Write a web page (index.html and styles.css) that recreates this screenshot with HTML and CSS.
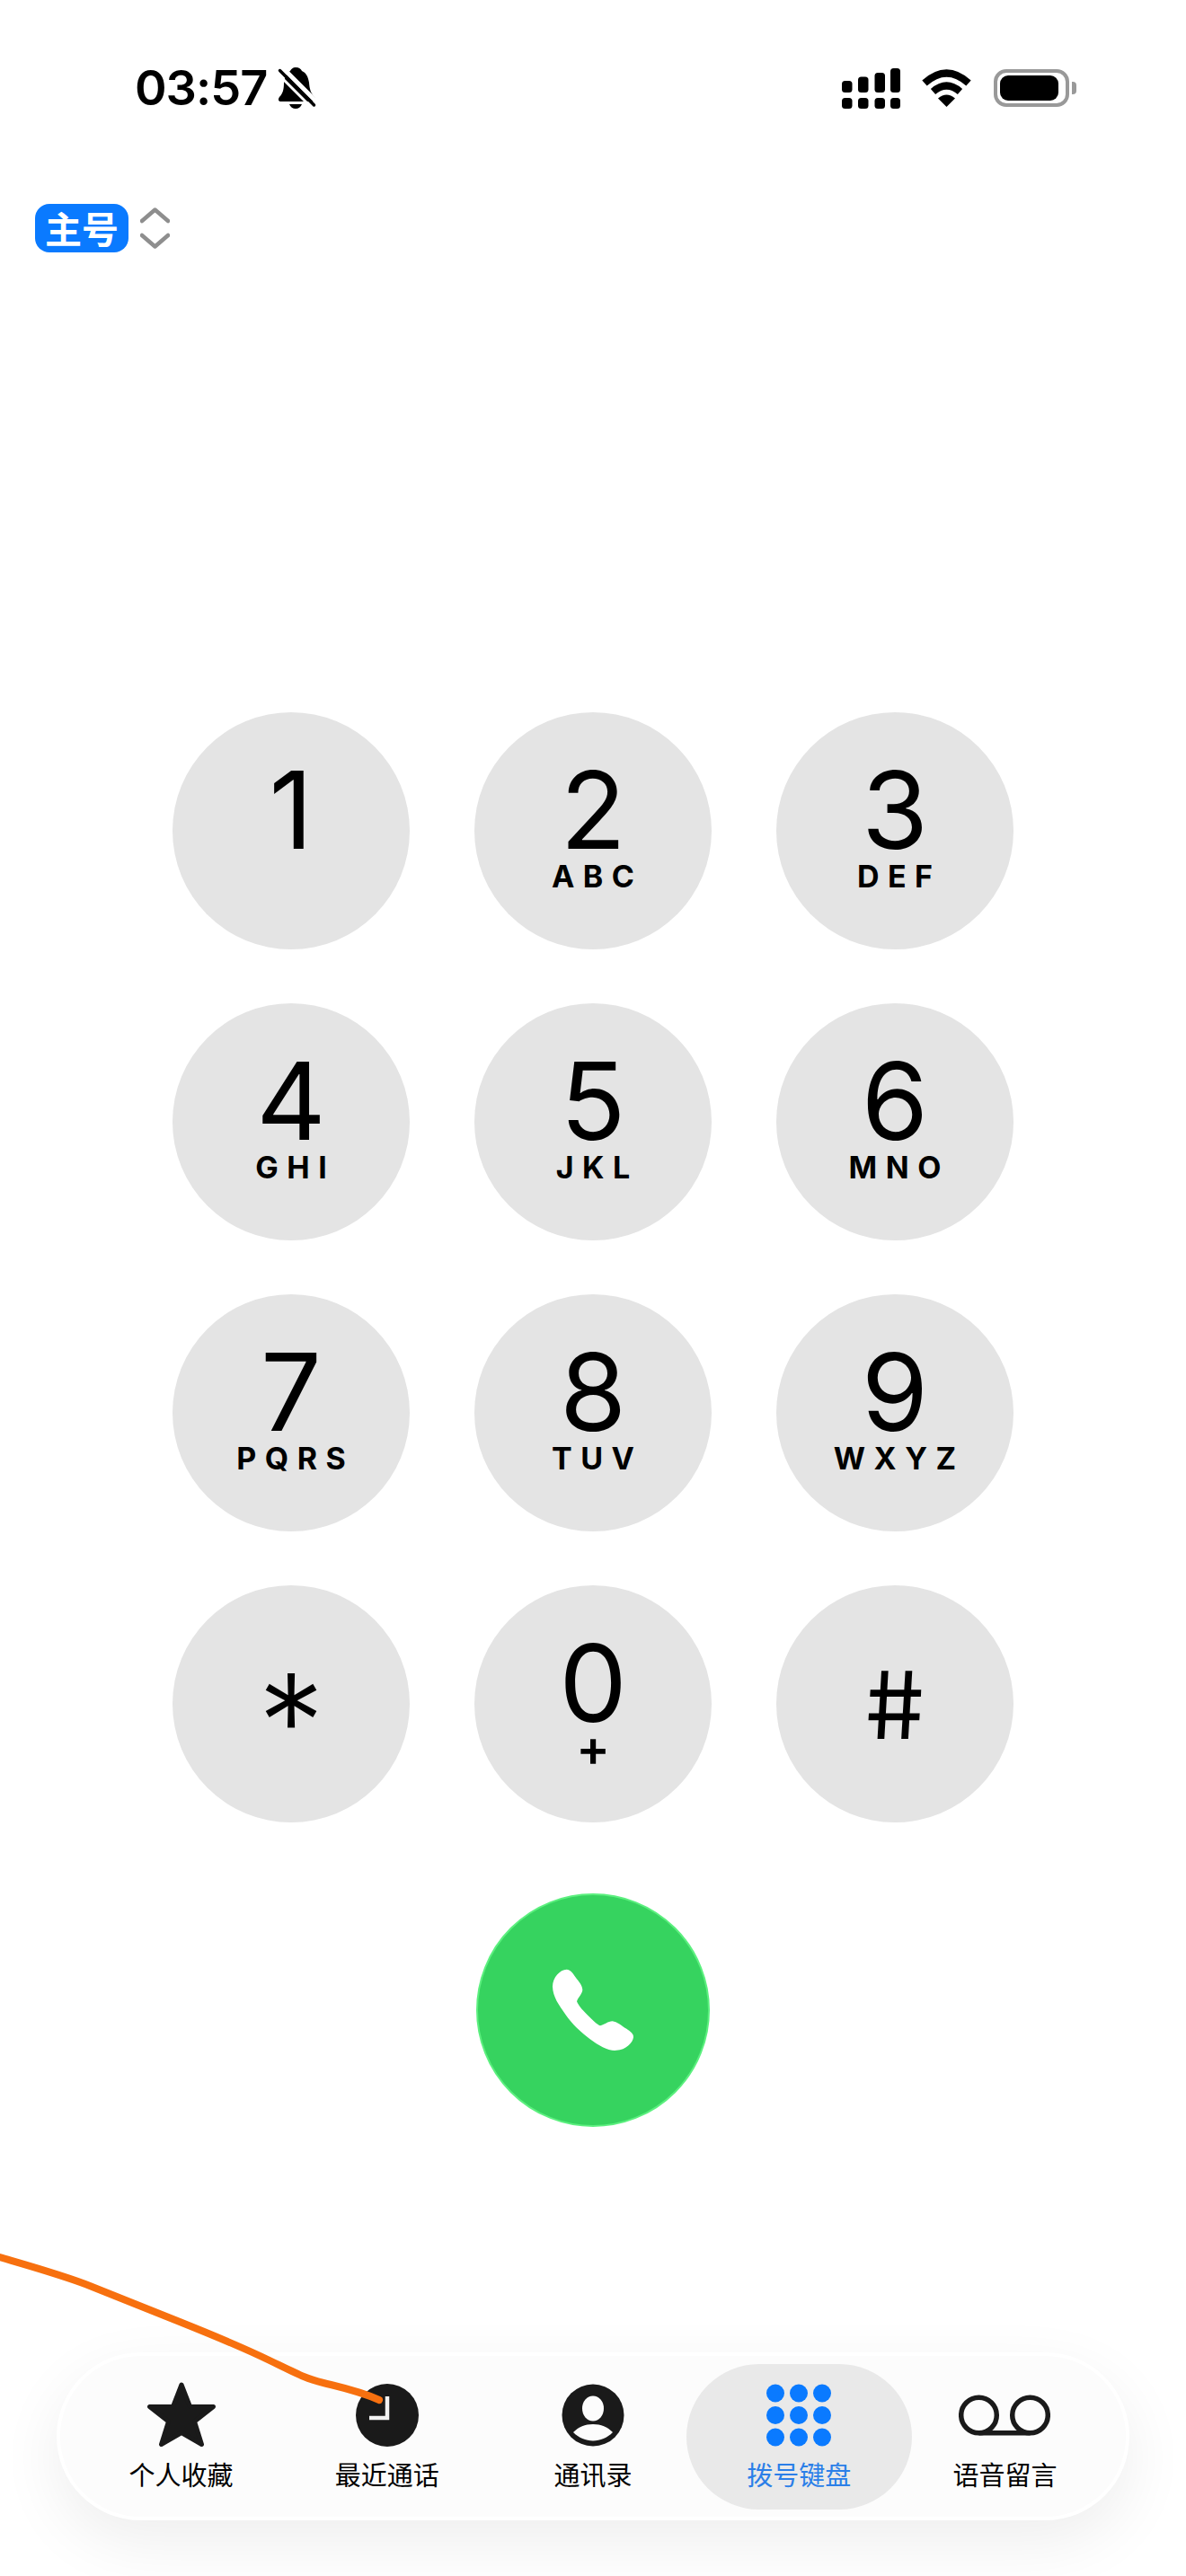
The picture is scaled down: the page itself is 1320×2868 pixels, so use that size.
FILE: index.html
```html
<!DOCTYPE html>
<html lang="zh-CN">
<head>
    <meta charset="UTF-8">
    <meta name="viewport" content="width=device-width, initial-scale=1.0">
    <title>拨号键盘</title>
    <link rel="stylesheet" href="styles.css">
</head>
<body>
    <div class="screen">
        <!-- Status bar -->
        <div class="status-bar">
            <div class="status-left">
                <span class="time">03:57</span>
                <svg class="bell" width="42" height="46" viewBox="0 0 42 46">
                    <path d="M19 0C23 0 25 2 26 4C31 6 33 11 34 17C34.500 24 36 29 40 33C42 36 41 38 38 38H3C0 38 -1 36 1 33C5 29 6 24 6 17C7 11 9 6 13 4C14 2 16 0 19 0Z"/>
                    <path d="M12 41H26C25 44 22 46 19 46C16 46 13 44 12 41Z"/>
                    <path d="M3 -1L46 42" stroke="#fff" stroke-width="5"/>
                    <path d="M1.500 3.500L39.500 42" stroke="#000" stroke-width="3.500" stroke-linecap="round"/>
                    <path d="M-3 5L35 43" stroke="#fff" stroke-width="3"/>
                </svg>
            </div>
            <div class="status-right">
                <svg width="65" height="45" viewBox="0 0 65 45">
                    <rect x="0" y="14" width="11.500" height="13" rx="3.500"/>
                    <rect x="18" y="9.500" width="11.500" height="17.500" rx="3.500"/>
                    <rect x="36.500" y="5" width="11.500" height="22" rx="3.500"/>
                    <rect x="54" y="0" width="11" height="27" rx="3.500"/>
                    <rect x="0" y="33" width="11.500" height="12" rx="3.500"/>
                    <rect x="18" y="33" width="11.500" height="12" rx="3.500"/>
                    <rect x="36.500" y="33" width="11.500" height="12" rx="3.500"/>
                    <rect x="54" y="33" width="11" height="12" rx="3.500"/>
                </svg>
                <svg width="57" height="42" viewBox="0 0 57 42">
                    <path d="M4 15.500Q28.500 -6.500 53 15.500" fill="none" stroke="#000" stroke-width="8"/>
                    <path d="M13.500 25Q28.500 12 43.500 25" fill="none" stroke="#000" stroke-width="8"/>
                    <path d="M28.500 42L19 32.500Q28.500 24.500 38 32.500Z"/>
                </svg>
                <div class="battery"><div class="battery-level"></div></div>
                <div class="battery-cap"></div>
            </div>
        </div>

        <!-- SIM selector -->
        <div class="sim-row">
            <span class="sim-badge">主号</span>
            <svg width="33" height="46" viewBox="0 0 33 46" fill="none" stroke="#8e8e8e" stroke-width="4.500" stroke-linecap="round" stroke-linejoin="round">
                <path d="M2 15L16.500 2.500L31 15"/>
                <path d="M2 31L16.500 43.500L31 31"/>
            </svg>
        </div>

        <!-- Keypad -->
        <div class="keypad">
            <div class="key"><span class="digit">1</span></div>
            <div class="key"><span class="digit">2</span><span class="letters">ABC</span></div>
            <div class="key"><span class="digit">3</span><span class="letters">DEF</span></div>
            <div class="key"><span class="digit">4</span><span class="letters">GHI</span></div>
            <div class="key"><span class="digit">5</span><span class="letters">JKL</span></div>
            <div class="key"><span class="digit">6</span><span class="letters">MNO</span></div>
            <div class="key"><span class="digit">7</span><span class="letters">PQRS</span></div>
            <div class="key"><span class="digit">8</span><span class="letters">TUV</span></div>
            <div class="key"><span class="digit">9</span><span class="letters">WXYZ</span></div>
            <div class="key key-symbol"><span class="star">*</span></div>
            <div class="key"><span class="digit">0</span><span class="plus">+</span></div>
            <div class="key key-symbol"><span class="hash">#</span></div>
        </div>

        <!-- Call button -->
        <div class="call-button">
            <svg width="100" height="97" viewBox="330 330 300 290">
                <path fill="#fff" d="M392 338C404 338 412 350 422 364C432 377 444 390 445 405C445 418 432 428 426 444C432 460 450 478 468 496C480 508 494 522 504 525C518 522 530 510 545 510C560 512 574 524 592 536C606 546 616 553 615 564C613 582 590 606 558 608C530 610 500 592 470 570C440 548 410 520 388 488C366 456 346 430 345 395C345 365 370 338 392 338Z"/>
            </svg>
        </div>

        <!-- Tab bar -->
        <div class="tab-bar">
            <div class="tab">
                <svg class="tab-icon" width="76" height="72" viewBox="0 0 76 72">
                    <path fill="#1a1a1a" stroke="#1a1a1a" stroke-width="5" stroke-linejoin="round" d="M38 3L47.500 27.500H73.500L52.500 44L60.500 69.500L38 56.500L15.500 69.500L23.500 44L2.500 27.500H28.500Z"/>
                </svg>
                <span class="tab-label">个人收藏</span>
            </div>
            <div class="tab">
                <svg class="tab-icon" width="70" height="70" viewBox="0 0 70 70">
                    <circle cx="35" cy="35" r="35" fill="#1a1a1a"/>
                    <path d="M35 14V38H15" fill="none" stroke="#f2f2f2" stroke-width="4.500"/>
                </svg>
                <span class="tab-label">最近通话</span>
            </div>
            <div class="tab">
                <svg class="tab-icon" width="70" height="70" viewBox="0 0 70 70">
                    <circle cx="35" cy="35" r="34.500" fill="#1a1a1a"/>
                    <ellipse cx="35" cy="27.500" rx="12" ry="14" fill="#fcfcfc"/>
                    <path fill="#fcfcfc" d="M13 54C19 48 26 45 35 45C44 45 51 48 57 54C51 60 43 63.500 35 63.500C27 63.500 19 60 13 54Z"/>
                </svg>
                <span class="tab-label">通讯录</span>
            </div>
            <div class="tab tab-active">
                <svg class="tab-icon" width="72" height="70" viewBox="0 0 72 70" fill="#0a7aff">
                    <circle cx="10" cy="10.500" r="10"/><circle cx="36" cy="10.500" r="10"/><circle cx="62" cy="10.500" r="10"/>
                    <circle cx="10" cy="35" r="10"/><circle cx="36" cy="35" r="10"/><circle cx="62" cy="35" r="10"/>
                    <circle cx="10" cy="59.500" r="10"/><circle cx="36" cy="59.500" r="10"/><circle cx="62" cy="59.500" r="10"/>
                </svg>
                <span class="tab-label">拨号键盘</span>
            </div>
            <div class="tab">
                <svg class="tab-icon tab-icon-voicemail" width="102" height="46" viewBox="0 0 102 46" fill="none" stroke="#1a1a1a" stroke-width="5.500">
                    <circle cx="22.500" cy="23" r="19.800"/>
                    <circle cx="79.500" cy="23" r="19.800"/>
                    <path d="M22.500 42.800H79.500"/>
                </svg>
                <span class="tab-label">语音留言</span>
            </div>
        </div>

        <!-- Orange trace drawn over the screen -->
        <svg class="trace" width="440" height="200" viewBox="0 0 440 200">
            <path d="M-4 22C30 32 70 43 100 55S170 83 200 95S265 121 300 138S340 158 360 163S400 172 422 182" fill="none" stroke="#f7700f" stroke-width="8" stroke-linecap="round"/>
        </svg>
    </div>
</body>
</html>
```

FILE: styles.css
```css
* {
    box-sizing: border-box;
}

body {
    margin: 0;
    background-color: #fff;
    font-family: Inter, "Noto Sans CJK SC", sans-serif;
    color: #000;
}

.screen {
    position: relative;
    width: 1320px;
    height: 2868px;
    overflow: hidden;
    display: flex;
    flex-direction: column;
}

/* Status bar */
.status-bar {
    height: 196px;
    padding: 0 122px 0 150px;
    display: flex;
    justify-content: space-between;
    align-items: center;
}

.status-left {
    display: flex;
    align-items: center;
    gap: 13px;
}

.time {
    font-size: 54px;
    font-weight: 600;
    letter-spacing: -1px;
    line-height: 60px;
}

.bell {
    overflow: visible;
}

.status-right {
    display: flex;
    align-items: center;
}

.status-right svg:first-child {
    margin-right: 23px;
}

.battery {
    width: 84px;
    height: 42px;
    margin-left: 24px;
    padding: 3px 8px 3px 3px;
    border: 4px solid #999;
    border-radius: 14px;
}

.battery-level {
    width: 65px;
    height: 28px;
    background-color: #000;
    border-radius: 9px;
}

.battery-cap {
    width: 5px;
    height: 14px;
    margin-left: 3px;
    background-color: #999;
    border-radius: 0 4px 4px 0;
}

/* SIM selector */
.sim-row {
    margin-top: 31px;
    padding-left: 39px;
    height: 54px;
    display: flex;
    align-items: center;
    gap: 13px;
}

.sim-badge {
    width: 104px;
    height: 54px;
    border-radius: 16px;
    background-color: #0a7aff;
    color: #fff;
    font-family: "Noto Sans CJK SC", sans-serif;
    font-size: 41px;
    font-weight: 700;
    line-height: 52px;
    text-align: center;
}

/* Keypad */
.keypad {
    margin: 512px auto 0;
    display: grid;
    grid-template-columns: repeat(3, 264px);
    grid-auto-rows: 264px;
    column-gap: 72px;
    row-gap: 60px;
}

.key {
    border-radius: 50%;
    background-color: #e4e4e4;
    padding-top: 52px;
    display: flex;
    flex-direction: column;
    align-items: center;
}

.digit {
    font-size: 120px;
    font-weight: 400;
    line-height: 114px;
    height: 114px;
}

.letters {
    font-size: 34px;
    font-weight: 700;
    line-height: 34px;
    letter-spacing: 9.500px;
    margin-right: -9.500px;
}

.plus {
    font-size: 56px;
    font-weight: 600;
    line-height: 34px;
    margin-top: -2px;
}

.key-symbol {
    padding-top: 0;
    justify-content: center;
}

.star {
    font-size: 148px;
    font-weight: 300;
    line-height: 148px;
    height: 148px;
    margin-top: 42px;
}

.hash {
    font-size: 104px;
    font-weight: 400;
    line-height: 104px;
    margin-top: 2px;
    transform: skewX(6deg);
}

/* Call button */
.call-button {
    width: 260px;
    height: 260px;
    margin: 79px auto 0;
    border-radius: 50%;
    background-color: #36d35f;
    border: 2px solid #5cf07f;
    display: flex;
    align-items: center;
    justify-content: center;
}

/* Tab bar */
.tab-bar {
    width: 1194px;
    height: 187px;
    margin: 251px auto 0;
    padding: 0 20px;
    border: 4px solid #fff;
    border-radius: 94px;
    background-color: #fcfcfc;
    box-shadow: 0 24px 70px rgba(0, 0, 0, 0.07);
    display: grid;
    grid-template-columns: repeat(5, 1fr);
    align-items: center;
}

.tab {
    height: 162px;
    margin: 0 -11px;
    border-radius: 81px;
    display: flex;
    flex-direction: column;
    align-items: center;
    justify-content: flex-end;
    padding-bottom: 22px;
}

.tab-active {
    background-color: #e9e9e9;
    color: #2b7fe8;
}

.tab-icon {
    margin-bottom: 12px;
}

.tab-icon-voicemail {
    margin-bottom: 24px;
}

.tab-label {
    font-family: "Noto Sans CJK SC", sans-serif;
    font-size: 29px;
    font-weight: 400;
    line-height: 36px;
    height: 36px;
}

/* Orange trace */
.trace {
    position: absolute;
    left: 0;
    top: 2490px;
    overflow: visible;
}
```
